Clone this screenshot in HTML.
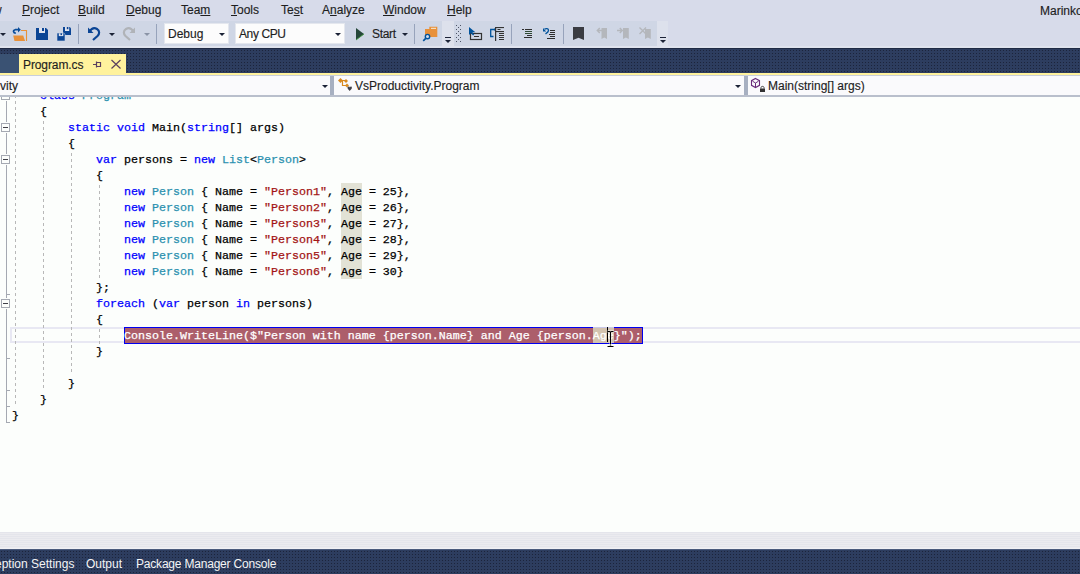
<!DOCTYPE html>
<html><head><meta charset="utf-8">
<style>
*{margin:0;padding:0;box-sizing:border-box}
html,body{width:1080px;height:574px;overflow:hidden;background:#fff;font-family:"Liberation Sans",sans-serif}
.abs{position:absolute}
#menu{left:0;top:0;width:1080px;height:21px;background:#d7dbea}
#tray{left:0;top:21px;width:1080px;height:27px;background:#d7dbea}
.mi{position:absolute;top:3px;font-size:12px;color:#1e1e1e;white-space:nowrap;-webkit-text-stroke:0.15px currentColor}
.mi u{text-decoration:underline;text-underline-offset:1px;text-decoration-thickness:1px}
.tb{position:absolute;top:21px;height:25px;background:#cfd6e5}
.sep{position:absolute;top:24px;width:1px;height:20px;background:#b4bdd1}
#dark{left:0;top:48px;width:1080px;height:25px;background:#293a5b;border-top:1px solid #1f2a44;overflow:hidden}
#tab{left:19px;top:54px;width:107px;height:19px;background:#fff29d}
#yline{left:0;top:73px;width:1080px;height:2px;background:#fff29d}
#nav{left:0;top:75px;width:1080px;height:22px;z-index:2;background:#fafafc;border-top:1px solid #c9cfdc;border-bottom:2px solid #b9bfcc}
.nt{position:absolute;top:3px;font-size:12px;color:#1e1e1e;white-space:nowrap;-webkit-text-stroke:0.15px currentColor}
#editor{left:0;top:96px;width:1080px;height:436px;background:#fcfefc;overflow:hidden}
.ln{position:absolute;left:13px;height:16px;font-family:"Liberation Mono",monospace;font-size:11.67px;line-height:16px;white-space:pre;color:#000;-webkit-text-stroke:0.25px currentColor}
.k{color:#0000ff}.t{color:#2b91af}.s{color:#a31515}
.guide{width:1px;background:repeating-linear-gradient(to bottom,transparent 0 1px,#b8b8b8 1px 4px,transparent 4px 6px)}
.obox{width:9px;height:9px;border:1px solid #a5a9b2;background:#fcfefc}
.obox:after{content:"";position:absolute;left:1px;top:3px;width:5px;height:1px;background:#404048}
#hscroll{left:0;top:532px;width:1080px;height:17px;background:repeating-linear-gradient(to bottom,#e4e5eb 0 1px,#ebebef 1px 2px);border-bottom:1px solid #f0f0f4}
#bottom{left:0;top:549px;width:1080px;height:25px;background:#293a5b;border-top:1px solid #4a5a7c;overflow:hidden}
.bt{position:absolute;top:7px;font-size:12px;color:#f4f4f4;white-space:nowrap}
</style></head><body>
<div id="menu" class="abs">
 <span class="mi" style="left:-7px">w</span>
 <span class="mi" style="left:22px"><u>P</u>roject</span>
 <span class="mi" style="left:78px"><u>B</u>uild</span>
 <span class="mi" style="left:126px"><u>D</u>ebug</span>
 <span class="mi" style="left:181px">Tea<u>m</u></span>
 <span class="mi" style="left:231px"><u>T</u>ools</span>
 <span class="mi" style="left:281px">Te<u>s</u>t</span>
 <span class="mi" style="left:322px">A<u>n</u>alyze</span>
 <span class="mi" style="left:383px"><u>W</u>indow</span>
 <span class="mi" style="left:447px"><u>H</u>elp</span>
 <span class="mi" style="left:1040px;top:4px">Marinko</span>
</div>
<div id="tray" class="abs"></div>
<div class="abs" style="left:0;top:46px;width:1080px;height:2px;background:#dfe3ee"></div>
<div class="tb" style="left:0;width:442px"></div>
<div class="tb" style="left:454px;width:203px"></div>
<div class="abs" style="left:442px;top:21px;width:12px;height:25px;background:#dde1ec"></div>
<div class="abs" style="left:657px;top:21px;width:11px;height:25px;background:#dde1ec"></div>
<div class="abs" style="left:164px;top:23px;width:65px;height:21px;background:#fcfcfc;border:1px solid #e4e7ee"></div>
<div class="abs" style="left:235px;top:23px;width:110px;height:21px;background:#fcfcfc;border:1px solid #e4e7ee"></div>
<span class="mi" style="left:168px;top:27px">Debug</span>
<span class="mi" style="left:239px;top:27px;letter-spacing:-0.4px">Any CPU</span>
<span class="mi" style="left:372px;top:27px;letter-spacing:-0.3px">Start</span>
<svg class="abs" style="left:0;top:0" width="1080" height="96" viewBox="0 0 1080 96">
 <!-- dropdown arrows -->
 <g fill="#1b2236">
  <path d="M0 33h6l-3 3z"/>
  <path d="M109 33h6l-3 3z"/>
  <path d="M219 33h6l-3 3z"/>
  <path d="M335 33h6l-3 3z"/>
  <path d="M402 33h6l-3 3z"/>
 </g>
 <path d="M144 33h6l-3 3z" fill="#8a93a6"/>
 <!-- separators -->
 <g fill="#97a3bb">
  <rect x="78" y="24" width="1" height="20"/>
  <rect x="156" y="24" width="1" height="20"/>
  <rect x="414" y="24" width="1" height="20"/>
  <rect x="511" y="24" width="1" height="20"/>
  <rect x="563" y="24" width="1" height="20"/>
 </g>
 <!-- open folder -->
 <path d="M21 30.5h5.5v10.5" fill="none" stroke="#e8913a" stroke-width="1.1"/>
 <path d="M13.2 35.5h10l1.9 5.5h-10.6z" fill="#e8913a"/>
 <path d="M15.8 33.2c-2.6 0-3.2-2.8-.6-3.5h3.3" fill="none" stroke="#0a4d9a" stroke-width="1.7"/>
 <path d="M18 27l2.8 2.7-2.8 2.7z" fill="#0a4d9a"/>
 <!-- save -->
 <path d="M36 28h10l2 2v10h-12z" fill="#0b4595"/>
 <rect x="39" y="28" width="6" height="5" fill="#dfe3ee"/>
 <rect x="42" y="28" width="2" height="3" fill="#0b4595"/>
 <!-- save all -->
 <path d="M63 27h6.8l1.2 1.2v6.8h-8z" fill="#0b4595"/>
 <rect x="65" y="27" width="4.2" height="4" fill="#dfe3ee"/>
 <rect x="66.8" y="27" width="1.6" height="2.2" fill="#0b4595"/>
 <path d="M57 33h6.8l1.2 1.2v6.8h-8z" fill="#0b4595" stroke="#cfd6e5" stroke-width="0.6"/>
 <rect x="58.8" y="33.3" width="4.5" height="2.8" fill="#dfe3ee"/>
 <rect x="60.5" y="33.3" width="1.5" height="1.8" fill="#0b4595"/>
 <!-- undo -->
 <path d="M89.5 31.5c2-3 5-4 7.5-2.5 3 1.8 2.5 5 0.5 7l-4.5 4" fill="none" stroke="#0b4595" stroke-width="2.2"/>
 <path d="M88 27.5v5.5h5.5z" fill="#0b4595"/>
 <!-- redo -->
 <path d="M133.5 31.5c-2-3-5-4-7.5-2.5-3 1.8-2.5 5-0.5 7l4.5 4" fill="none" stroke="#b0b3b8" stroke-width="2.2"/>
 <path d="M135 27.5v5.5h-5.5z" fill="#b0b3b8"/>
 <!-- play -->
 <path d="M356 28v12l8-6z" fill="#25473a"/>
 <path d="M356 40l8-6" stroke="#3e9a3a" stroke-width="0.8"/>
 <!-- find in files -->
 <path d="M425 29h4.3v-2.2h8v10.2h-12.3z" fill="#e8913a"/>
 <rect x="431" y="27.8" width="5" height="1.1" fill="#f6e6d0"/>
 <circle cx="427.5" cy="36.6" r="2.2" fill="#d6dbe8" stroke="#00539c" stroke-width="1.4"/>
 <path d="M425.8 38.4l-2.6 2.4" stroke="#00539c" stroke-width="1.7"/>
 <!-- overflow 1 -->
 <rect x="445" y="37" width="6" height="1" fill="#1b2236"/>
 <path d="M445 40h6l-3 3z" fill="#1b2236"/>
 <!-- grip -->
 <g fill="#4d5466">
  <rect x="456" y="25" width="1" height="1"/><rect x="458" y="27" width="1" height="1"/>
  <rect x="456" y="29" width="1" height="1"/><rect x="458" y="31" width="1" height="1"/>
  <rect x="456" y="33" width="1" height="1"/><rect x="458" y="35" width="1" height="1"/>
  <rect x="456" y="37" width="1" height="1"/><rect x="458" y="39" width="1" height="1"/>
  <rect x="456" y="41" width="1" height="1"/>
  <rect x="460" y="25" width="1" height="1"/><rect x="460" y="29" width="1" height="1"/>
  <rect x="460" y="33" width="1" height="1"/><rect x="460" y="37" width="1" height="1"/>
  <rect x="460" y="41" width="1" height="1"/>
 </g>
 <!-- icon step -->
 <rect x="470.5" y="33.5" width="11" height="6" fill="none" stroke="#333" stroke-width="1.2"/>
 <rect x="474" y="36" width="5" height="1" fill="#333"/>
 <path d="M469 27v8l2-2 2 2.5 1.2-0.8-1.8-2.5h3z" fill="#00539c"/>
 <!-- icon 2 -->
 <path d="M493.5 29.5h-2.8v7h2.8M492.5 29.5h2" fill="none" stroke="#00539c" stroke-width="1.3"/>
 <path d="M494 28l1.6 1.5-1.6 1.5z" fill="#00539c"/>
 <rect x="495" y="27" width="1.2" height="14" fill="#333"/>
 <g fill="#333"><rect x="495" y="27" width="9" height="1.1"/><rect x="497.5" y="29" width="3" height="1"/><rect x="495" y="31" width="9" height="1.1"/><rect x="499" y="33" width="5" height="1"/><rect x="499" y="35" width="5" height="1"/><rect x="499" y="37" width="5" height="1"/><rect x="499" y="39" width="5" height="1"/></g>
 <!-- icon indent -->
 <g fill="#2e2e2e"><rect x="522" y="29" width="2" height="1"/><rect x="525" y="29" width="7" height="1"/><rect x="525" y="31" width="7" height="1" fill="#2f4a33"/><rect x="525" y="33" width="7" height="1" fill="#2f4a33"/><rect x="527" y="35" width="5" height="1"/><rect x="524" y="37" width="8" height="1"/></g>
 <!-- icon 4 -->
 <path d="M544.5 29.2c1.5-1 4-.8 4 1.2 0 1.5-1.5 2.5-3 3.5" fill="none" stroke="#00539c" stroke-width="1.4"/>
 <path d="M543 28v3.5h3.2z" fill="#00539c"/>
 <g fill="#2e2e2e"><rect x="550" y="30" width="5" height="1"/><rect x="550" y="32" width="5" height="1"/><rect x="549" y="34" width="6" height="1"/><rect x="550" y="36" width="5" height="1"/><rect x="547" y="38" width="8" height="1"/></g>
 <!-- bookmark -->
 <path d="M573 27h11v13l-5.5-2.2-5.5 2.2z" fill="#3a3c42"/>
 <!-- gray bookmark icons -->
 <g fill="#b4b7bc">
  <path d="M601.5 28h5.5v11l-2.75-1.5-2.75 1.5z"/>
  <path d="M623 28h5.8v11l-2.9-1.5-2.9 1.5z"/>
  <path d="M645 29h5.8v10l-2.9-1.5-2.9 1.5z"/>
 </g>
 <g stroke="#b4b7bc" stroke-width="1.4" fill="none">
  <path d="M603 30.5h-5M599.8 28l-2.5 2.5 2.5 2.5"/>
  <path d="M617 30.5h5M619.8 28l2.5 2.5-2.5 2.5"/>
  <path d="M639.5 27.5l6.5 6.5M646 27.5l-6.5 6.5"/>
 </g>
 <!-- overflow 2 -->
 <rect x="660" y="37" width="6" height="1" fill="#1b2236"/>
 <path d="M660 40h6l-3 3z" fill="#1b2236"/>
</svg>
<div id="dark" class="abs"><svg class="abs" style="left:0;top:0" width="1080" height="26"><defs><pattern id="P1" width="3" height="3" patternUnits="userSpaceOnUse"><rect width="3" height="3" fill="#2d3d5f"/><rect x="1" y="1" width="1" height="1" fill="#1c243b"/></pattern></defs><rect width="1080" height="26" fill="url(#P1)"/></svg></div>
<div id="tab" class="abs"></div>
<div class="abs" style="left:0;top:54px;width:19px;height:19px;background:#3a5273"></div>
<span class="abs" style="left:23px;top:58px;font-size:12px;color:#1e1e1e;white-space:nowrap;-webkit-text-stroke:0.15px currentColor;letter-spacing:-0.1px">Program.cs</span>
<svg class="abs" style="left:0;top:0" width="140" height="80">
 <g stroke="#5a3f5e" stroke-width="1.2" fill="none">
  <path d="M93 64.5h3.5M96.5 61.5v6M96.5 62.5h4v4h-4M100.5 62v5"/>
  <path d="M111.5 60l9 8.5M120.5 60l-9 8.5"/>
 </g>
</svg>

<div id="yline" class="abs"></div>
<div id="nav" class="abs">
<svg class="abs" style="left:0;top:-1px" width="1080" height="22" viewBox="0 75 1080 22">
 <rect x="330" y="76" width="4" height="19" fill="#a7b0c1"/>
 <rect x="744" y="76" width="4" height="19" fill="#a7b0c1"/>
 <path d="M322 85h6l-3 3z" fill="#1b2236"/>
 <path d="M735 85h6l-3 3z" fill="#1b2236"/>
 <g fill="#d98a1f">
  <path d="M340.5 78l2.5 2.5-2.5 2.5-2.5-2.5z"/>
  <path d="M346 79l2 2-2 2-2-2z"/>
  <path d="M347 83.5l2 2-2 2-2-2z"/>
 </g>
 <path d="M341 80.5h5M342.5 81v4.5h4" stroke="#d98a1f" stroke-width="1.2" fill="none"/>
 <path d="M347.5 87.2c.8-1.2 2.2-1 2.2.3 .6-1.3 2.2-1.3 2.2.2 0 1.4-1.6 2.2-2.2 3.3-.6-1.1-2.2-1.9-2.2-3.3z" fill="#404048"/>
 <path d="M755.5 78.5l4 2.2v4.6l-4 2.2-4-2.2v-4.6z" fill="none" stroke="#6b2d7b" stroke-width="1.1"/>
 <path d="M755.5 83v4.5M755.5 83l-3-1.8M755.5 83l3-1.8" stroke="#6b2d7b" stroke-width="1" fill="none"/>
 <rect x="760" y="88.5" width="5" height="3.5" fill="#333"/>
 <path d="M761 88.5v-1c0-1.5 3-1.5 3 0v1" stroke="#333" stroke-width="0.9" fill="none"/>
</svg>
 <span class="nt" style="left:0">vity</span>
 <span class="nt" style="left:355px">VsProductivity.Program</span>
 <span class="nt" style="left:768px">Main(string[] args)</span>
</div>
<div id="editor" class="abs">
<div class="abs" style="left:10px;top:231px;width:1080px;height:16px;border:2px solid #e8e8f3;border-right:none"></div><div class="abs guide" style="left:15px;top:-8px;height:316px"></div>
<div class="abs guide" style="left:43px;top:24px;height:268px"></div>
<div class="abs guide" style="left:71px;top:56px;height:220px"></div>
<div class="abs guide" style="left:99px;top:88px;height:94px"></div>
<div class="abs guide" style="left:99px;top:232px;height:16px"></div>
<div class="abs" style="left:341px;top:87px;width:21px;height:16px;background:#e2e2d5"></div>
<div class="abs" style="left:341px;top:103px;width:21px;height:16px;background:#e2e2d5"></div>
<div class="abs" style="left:341px;top:119px;width:21px;height:16px;background:#e2e2d5"></div>
<div class="abs" style="left:341px;top:135px;width:21px;height:16px;background:#e2e2d5"></div>
<div class="abs" style="left:341px;top:151px;width:21px;height:16px;background:#e2e2d5"></div>
<div class="abs" style="left:341px;top:167px;width:21px;height:16px;background:#e2e2d5"></div>
<div class="abs obox" style="left:1px;top:-5px"></div>
<div class="abs obox" style="left:1px;top:27px"></div>
<div class="abs obox" style="left:1px;top:59px"></div>
<div class="abs obox" style="left:1px;top:203px"></div>
<div class="abs" style="left:6px;top:5px;width:1px;height:21px;background:#a5a9b2"></div>
<div class="abs" style="left:6px;top:37px;width:1px;height:21px;background:#a5a9b2"></div>
<div class="abs" style="left:6px;top:69px;width:1px;height:133px;background:#a5a9b2"></div>
<div class="abs" style="left:6px;top:213px;width:1px;height:114px;background:#a5a9b2"></div>
<div class="abs" style="left:6px;top:198px;width:4px;height:1px;background:#a5a9b2"></div>
<div class="abs" style="left:6px;top:262px;width:4px;height:1px;background:#a5a9b2"></div>
<div class="abs" style="left:6px;top:294px;width:4px;height:1px;background:#a5a9b2"></div>
<div class="abs" style="left:6px;top:310px;width:4px;height:1px;background:#a5a9b2"></div>
<div class="abs" style="left:6px;top:326px;width:4px;height:1px;background:#a5a9b2"></div>
<div class="ln" style="top:-8px;left:40px"><span class="k">class</span> <span class="t">Program</span></div>
<div class="ln" style="top:8px;left:40px">{</div>
<div class="ln" style="top:24px;left:68px"><span class="k">static</span> <span class="k">void</span> Main(<span class="k">string</span>[] args)</div>
<div class="ln" style="top:40px;left:68px">{</div>
<div class="ln" style="top:56px;left:96px"><span class="k">var</span> persons = <span class="k">new</span> <span class="t">List</span>&lt;<span class="t">Person</span>&gt;</div>
<div class="ln" style="top:72px;left:96px">{</div>
<div class="ln" style="top:88px;left:124px"><span class="k">new</span> <span class="t">Person</span> { Name = <span class="s">"Person1"</span>, Age = 25},</div>
<div class="ln" style="top:104px;left:124px"><span class="k">new</span> <span class="t">Person</span> { Name = <span class="s">"Person2"</span>, Age = 26},</div>
<div class="ln" style="top:120px;left:124px"><span class="k">new</span> <span class="t">Person</span> { Name = <span class="s">"Person3"</span>, Age = 27},</div>
<div class="ln" style="top:136px;left:124px"><span class="k">new</span> <span class="t">Person</span> { Name = <span class="s">"Person4"</span>, Age = 28},</div>
<div class="ln" style="top:152px;left:124px"><span class="k">new</span> <span class="t">Person</span> { Name = <span class="s">"Person5"</span>, Age = 29},</div>
<div class="ln" style="top:168px;left:124px"><span class="k">new</span> <span class="t">Person</span> { Name = <span class="s">"Person6"</span>, Age = 30}</div>
<div class="ln" style="top:184px;left:96px">};</div>
<div class="ln" style="top:200px;left:96px"><span class="k">foreach</span> (<span class="k">var</span> person <span class="k">in</span> persons)</div>
<div class="ln" style="top:216px;left:96px">{</div>
<div class="abs" style="left:124px;top:231px;width:519px;height:17px;background:#ac5e6b;border:1px solid #0000f0"></div>
<div class="abs" style="left:593px;top:231px;width:21px;height:16px;background:#d3c3af;border-top:1px solid #c8c8e8"></div>
<div class="ln" style="top:232px;left:124px;color:#fff">Console.WriteLine($"Person with name {person.Name} and Age {person.Age}");</div>
<div class="ln" style="top:248px;left:96px">}</div>
<div class="ln" style="top:280px;left:68px">}</div>
<div class="ln" style="top:296px;left:40px">}</div>
<div class="ln" style="top:312px;left:12px">}</div>
<div class="abs" style="left:607px;top:231px;width:1px;height:15px;background:#000"></div>
<svg class="abs" style="left:604px;top:234px" width="14" height="20" viewBox="0 0 14 20">
 <path d="M3.5 1.5h2c1 0 1 1 1 1M9.5 1.5h-2c-1 0-1 1-1 1M6.5 2.5v12M3.5 16.5h2c1 0 1-1 1-1M9.5 16.5h-2c-1 0-1-1-1-1" stroke="#fff" stroke-width="2.4" fill="none" opacity="0.6"/>
 <path d="M3.5 1.5h2c1 0 1 1 1 1M9.5 1.5h-2c-1 0-1 1-1 1M6.5 2.5v12M3.5 16.5h2c1 0 1-1 1-1M9.5 16.5h-2c-1 0-1-1-1-1" stroke="#000" stroke-width="1.1" fill="none"/>
</svg>
</div>
<div id="hscroll" class="abs"></div>
<div id="bottom" class="abs"><svg class="abs" style="left:0;top:0" width="1080" height="25"><rect width="1080" height="25" fill="url(#P1)"/></svg>
 <span class="bt" style="left:-25px">Exception Settings</span>
 <span class="bt" style="left:86px">Output</span>
 <span class="bt" style="left:136px;letter-spacing:-0.2px">Package Manager Console</span>
</div>
</body></html>
